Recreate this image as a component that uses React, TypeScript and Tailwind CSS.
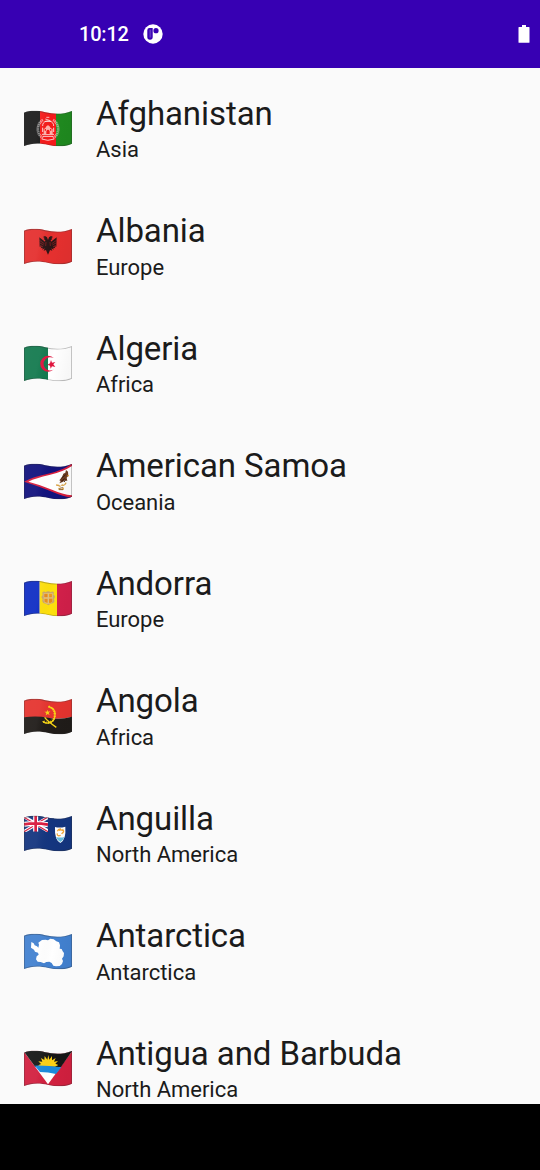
import type { ReactNode } from "react";

const SHAPE =
  "M24 38 C42 31 64 31 88 37 C114 43 140 44 168 33 V131 C146 141 122 140 98 135 C70 128 46 129 24 138 Z";

function Flag({ id, children }: { id: string; children: ReactNode }) {
  return (
    <svg viewBox="0 0 192 168" className="h-14 w-16 shrink-0">
      <defs>
        <clipPath id={id}>
          <path d={SHAPE} />
        </clipPath>
        <linearGradient id={`${id}-shade`} x1="0" y1="0" x2="1" y2="0.15">
          <stop offset="0" stopColor="#fff" stopOpacity="0.06" />
          <stop offset="0.35" stopColor="#fff" stopOpacity="0.05" />
          <stop offset="0.65" stopColor="#000" stopOpacity="0" />
          <stop offset="1" stopColor="#000" stopOpacity="0.03" />
        </linearGradient>
      </defs>
      <g clipPath={`url(#${id})`}>
        {children}
        <path d={SHAPE} fill={`url(#${id}-shade)`} />
        <path d={SHAPE} fill="none" stroke="#333" strokeOpacity="0.32" strokeWidth="5" />
      </g>
    </svg>
  );
}

const Afghanistan = () => (
  <Flag id="af">
    <path d="M24 28h48v114H24z" fill="#1c1c1c" />
    <path d="M72 28h48v114H72z" fill="#f51a1a" />
    <path d="M120 28h48v114h-48z" fill="#1f8a1f" />
    <g fill="none" stroke="#fff">
      <path d="M81 60C60 72 60 106 83 114M111 60C132 72 132 106 109 114" strokeWidth="8" opacity="0.5" strokeDasharray="4 1.5" />
      <path d="M80 78C78 58 114 58 113 78M77 117q18 8 38 0" strokeWidth="3" opacity="0.75" />
      <path d="M88 57l15 5M86 64h20M91 52h9" strokeWidth="3" opacity="0.7" />
      <path d="M78 103h36M81 109h30M80 96v-13M113 96V83" strokeWidth="3" opacity="0.8" />
    </g>
    <path d="M83 102V88l5-4q8-16 16 0l6 4v14z" fill="#ffb0aa" />
    <path d="M91 102V93q5-8 10 0v9zM86 87h4v5h-4zM102 87h4v5h-4z" fill="#f51a1a" />
  </Flag>
);

const Albania = () => (
  <Flag id="al">
    <path d="M24 28h144v114H24z" fill="#e5302f" />
    <path
      d="M96 66l-3-8-6-4-6 3 5 3-3 3 5 4-1 4-17-13 1 28 6-1-3 6 6-2-1 6 7-4-3 7 7-2 2 5 4 9 4-9 2-5 7 2-3-7 7 4-1-6 6 2-3-6 6 1 1-28-17 13-1-4 5-4-3-3 5-3-6-3-6 4z"
      fill="#2b1516"
    />
    <path d="M69 66l16 11M70 74l13 7M71 82l10 4M123 66l-16 11M122 74l-13 7M121 82l-10 4M90 72l-1 12M102 72l1 12" stroke="#a52224" strokeWidth="1.8" />
  </Flag>
);

const Algeria = () => (
  <Flag id="dz">
    <path d="M24 28h72v114H24z" fill="#147a4f" />
    <path d="M96 28h72v114H96z" fill="#fff" />
    <path d="M114 70A24 24 0 1 0 114 103A20 20 0 1 1 114 70z" fill="#e0163f" />
    <path d="M105 75l3 8 10-2-6 7 6 8-10-2-4 7-2-9-8-3 8-4z" fill="#e0163f" />
  </Flag>
);

const AmericanSamoa = () => (
  <Flag id="as">
    <path d="M24 28h144v114H24z" fill="#12127e" />
    <path d="M24 86Q50 71 96 62T168 31V134Q142 131 110 117T24 86z" fill="#d91e3e" />
    <path d="M37 86Q60 75 100 66T168 39V127Q140 124 108 110T37 86z" fill="#fff" />
    <path d="M150 51l6 5 1 12-5 6 2 10-7-2-7 5-10 4 4-7-4-2 8-10 4-10 6-3z" fill="#6c3c20" />
    <path d="M136 76l13-11M136 85l10-8M144 87l6-8" stroke="#3e2011" strokeWidth="3" />
    <path d="M153 66l6 1-2 4z" fill="#e49b17" />
    <path d="M120 94l9 1 4 4 5-5 6 1 5-7 3 2-4 6-6 3-6-1-4 4-6-3h-5z" fill="#dba64b" />
    <path d="M127 104l9 3 8-4-1 8-16-1z" fill="#dba64b" />
    <path d="M130 106l11-3M129 110h12" stroke="#714724" strokeWidth="2" />
  </Flag>
);

const Andorra = () => (
  <Flag id="ad">
    <path d="M24 28h47v114H24z" fill="#0f2dc4" />
    <path d="M71 28h52v114H71z" fill="#fddf0d" />
    <path d="M123 28h45v114h-45z" fill="#d2204a" />
    <path
      d="M79 67q6-5 10 0 8-6 15 0 5-5 10 0l-2 7q7 3 4 10l-3 3q5 7-1 12l-8 2-7 5-7-5-8-2q-6-5-2-12-7-6 0-11z"
      fill="#c9a66c"
    />
    <path d="M83 69h27v25q-4 8-13 8-13-1-14-9z" fill="#e0c080" />
    <path d="M85 71h10v11H85zM99 86h10v9l-5 4h-5z" fill="#ef9618" />
    <path d="M99 71h9v11h-9zM85 86h10v13l-9-3z" fill="#f4a51c" />
    <path d="M87 73v8M91 73v8M101 75h6M101 80h6M102 86v10M106 86v10M88 87v9M92 87v10" stroke="#e07a2c" strokeWidth="2" />
  </Flag>
);

const Angola = () => (
  <Flag id="ao">
    <path d="M24 28h144v59q-36 8-72 3T24 89z" fill="#e5342f" />
    <path d="M24 88q36-6 72 1t72-3v58H24z" fill="#201c19" />
    <g fill="none" stroke="#f9d616">
      <path d="M97 55q22 6 20 26-1 23-21 24-10 1-16-5" strokeWidth="4" />
      <path d="M98 56q19 6 18 25-1 20-20 23-9 1-15-5" strokeWidth="7" strokeDasharray="3 4" />
      <path d="M86 88q8 11 35 30" strokeWidth="4" />
    </g>
    <path d="M94 65l2 6 7-1-5 5 3 6-6-3-6 4 2-7-6-4h7z" fill="#f9d616" />
  </Flag>
);

const Anguilla = () => (
  <Flag id="ai">
    <path d="M24 28h144v114H24z" fill="#14357f" />
    <g>
      <path d="M24 35l72 43M96 37L24 80" stroke="#fff" strokeWidth="10" />
      <path d="M24 37l34 20M62 60l34 20M96 36L63 55M56 61L24 80" stroke="#d8173c" strokeWidth="3.5" />
      <path d="M59 29v55M24 58q34-6 72 1" fill="none" stroke="#fff" strokeWidth="15" />
      <path d="M59 29v55M24 58q34-6 72 1" fill="none" stroke="#d8173c" strokeWidth="8" />
    </g>
    <path d="M96 30h18v60H24v-9q36-4 72 1z" fill="#14357f" />
    <path d="M117 66q14 4 31-1 3 39-15 49-18-9-16-48z" fill="#fff" />
    <path d="M120 96q13 3 25 0-3 11-12 15-9-5-13-15z" fill="#65bce1" />
    <path d="M124 79q3-8 11-7M139 73q7 5 1 11M134 91q-12 4-10-6M129 76q9-4 10 2M137 87q2-4 5-6" fill="none" stroke="#f3a93a" strokeWidth="4" />
  </Flag>
);

const AntarcticaFlag = () => (
  <Flag id="aq">
    <path d="M24 28h144v114H24z" fill="#4281d0" />
    <path
      d="M46 57l7 4 3 6 7 3 4 4 2-9-2-6 6-4 5-4 11-1 7 2 7-5 10 2 8 6 8 3 3 9-1 10 6 1 3 7 4 5-1 10-5 7 3 7-3 9-7 6-11 1-8-2-5-8-7-4-9 1-7 4-10-4-9-1-5-7 2-9 6-5-2-6-9-3-3-6-9-6z"
      fill="#fff"
    />
  </Flag>
);

const AntiguaFlag = () => (
  <Flag id="ag">
    <path d="M24 28h144v114H24z" fill="#d2203f" />
    <path d="M24 28h144v6L96 133 24 35z" fill="#fff" />
    <path d="M24 28h144v6l-33 47H58L24 35z" fill="#161616" />
    <path d="M97 45l3 14 8-11v13l11-7-5 11 12-2-8 8 9 4-10 5H76l-10-4 9-4-8-8 12 1-4-11 10 6 1-12 8 11z" fill="#fcd116" />
    <path d="M56 77q36-1 80 5l-16 20q-24-6-48-6z" fill="#1b8adc" />
  </Flag>
);

const countries = [
  { name: "Afghanistan", region: "Asia", Icon: Afghanistan },
  { name: "Albania", region: "Europe", Icon: Albania },
  { name: "Algeria", region: "Africa", Icon: Algeria },
  { name: "American Samoa", region: "Oceania", Icon: AmericanSamoa },
  { name: "Andorra", region: "Europe", Icon: Andorra },
  { name: "Angola", region: "Africa", Icon: Angola },
  { name: "Anguilla", region: "North America", Icon: Anguilla },
  { name: "Antarctica", region: "Antarctica", Icon: AntarcticaFlag },
  { name: "Antigua and Barbuda", region: "North America", Icon: AntiguaFlag },
];

export default function App() {
  return (
    <div className="flex h-[1170px] w-[540px] flex-col overflow-hidden bg-[#fafafa] font-['Roboto',sans-serif] text-[#1b1b1b]">
      <header className="flex h-[67.5px] shrink-0 items-center bg-[#3700b3] pr-[10px] pl-[79px] text-white">
        <span className="w-[50px] pt-px text-[20px] leading-6 font-medium tracking-[-0.2px]">10:12</span>
        <svg viewBox="0 0 20 20" className="ml-[14px] h-5 w-5">
          <circle cx="10" cy="10" r="9.7" fill="#fff" />
          <path d="M6.5 4h3.2v9a2.7 2.7 0 0 1-5.4 0V6.2A2.2 2.2 0 0 1 6.5 4z" fill="#3700b3" />
          <path d="M6.4 5.6h1.8v8H6.4z" fill="#fff" opacity="0.2" />
          <circle cx="13" cy="6.7" r="2.6" fill="#3700b3" />
        </svg>
        <svg viewBox="0 0 12 18" className="ml-auto h-[18px] w-3">
          <path d="M4 0h4v2h3q.5 0 .5.6v14.6q0 .6-.6.6H1.1q-.6 0-.6-.6V2.6Q.5 2 1 2h3z" fill="#fff" />
        </svg>
      </header>
      <main className="min-h-0 flex-1 overflow-hidden">
        {countries.map(({ name, region, Icon }) => (
          <div key={name} className="flex h-[117.5px] items-start pl-4">
            <div className="pt-[32.5px]">
              <Icon />
            </div>
            <div className="pt-[25px] pl-4">
              <div className="text-[33px] leading-[42px] tracking-[-0.08px] whitespace-nowrap">{name}</div>
              <div className="pt-[0.5px] text-[22px] leading-[30px] tracking-[-0.04px] whitespace-nowrap">{region}</div>
            </div>
          </div>
        ))}
      </main>
      <footer className="h-[66px] shrink-0 bg-black" />
    </div>
  );
}
